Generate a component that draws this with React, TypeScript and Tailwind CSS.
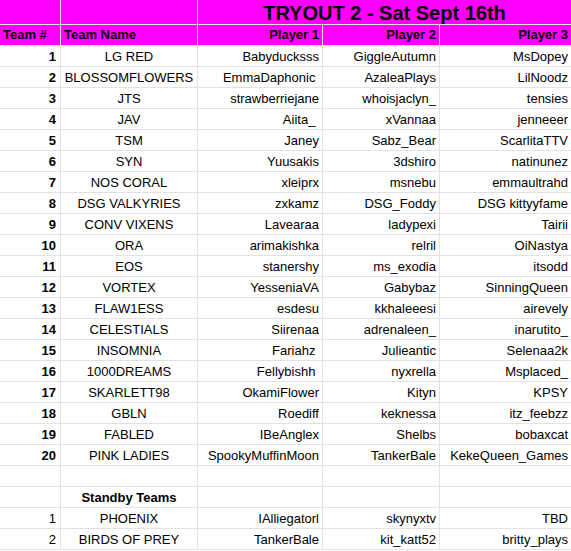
const TEAMS = [
  ['LG RED', 'Babyducksss', 'GiggleAutumn', 'MsDopey'],
  ['BLOSSOMFLOWERS', 'EmmaDaphonic ', 'AzaleaPlays', 'LilNoodz'],
  ['JTS', 'strawberriejane', 'whoisjaclyn_', 'tensies'],
  ['JAV', 'Aiita_ ', 'xVannaa', 'jenneeer'],
  ['TSM', 'Janey', 'Sabz_Bear', 'ScarlitaTTV'],
  ['SYN', 'Yuusakis', '3dshiro', 'natinunez'],
  ['NOS CORAL', 'xleiprx', 'msnebu', 'emmaultrahd'],
  ['DSG VALKYRIES', 'zxkamz', 'DSG_Foddy', 'DSG kittyyfame'],
  ['CONV VIXENS', 'Lavearaa', 'ladypexi', 'Tairii'],
  ['ORA', 'arimakishka', 'relril', 'OiNastya'],
  ['EOS', 'stanershy', 'ms_exodia', 'itsodd'],
  ['VORTEX', 'YesseniaVA', 'Gabybaz', 'SinningQueen'],
  ['FLAW1ESS', 'esdesu', 'kkhaleeesi', 'airevely'],
  ['CELESTIALS', 'Siirenaa', 'adrenaleen_', 'inarutito_'],
  ['INSOMNIA', 'Fariahz ', 'Julieantic', 'Selenaa2k'],
  ['1000DREAMS', 'Fellybishh ', 'nyxrella', 'Msplaced_'],
  ['SKARLETT98', 'OkamiFlower', 'Kityn', 'KPSY'],
  ['GBLN', 'Roediff', 'keknessa', 'itz_feebzz'],
  ['FABLED', 'IBeAnglex', 'Shelbs', 'bobaxcat'],
  ['PINK LADIES', 'SpookyMuffinMoon', 'TankerBale', 'KekeQueen_Games'],
];

const STANDBY = [
  ['PHOENIX', 'IAlliegatorl', 'skynyxtv', 'TBD'],
  ['BIRDS OF PREY', 'TankerBale', 'kit_katt52', 'britty_plays'],
];

const cell = 'bg-white h-[20px] pt-[1px] flex items-center whitespace-pre overflow-hidden';
const head = 'bg-[#ff00ff] h-[20px] flex items-center font-bold';

function Row({ num, bold, data }: { num: number; bold: boolean; data: string[] }) {
  return (
    <>
      <div className={`${cell} justify-end pr-[4px] ${bold ? 'font-bold' : ''}`}>{num}</div>
      <div className={`${cell} justify-center`}>{data[0]}</div>
      <div className={`${cell} justify-end pr-[3px]`}>{data[1]}</div>
      <div className={`${cell} justify-end pr-[3px]`}>{data[2]}</div>
      <div className={`${cell} justify-end pr-[3px]`}>{data[3]}</div>
    </>
  );
}

export default function App() {
  return (
    <div
      className="w-[571px] h-[551px] overflow-hidden bg-white text-[13px] text-black"
      style={{ fontFamily: '"Liberation Sans", Arial, sans-serif' }}
    >
      <div className="grid grid-cols-[60px_136px_124px_116px_131px] gap-px bg-[#e2e2e2] pb-px w-[571px]">
        {/* title row */}
        <div className="bg-[#ff00ff] h-[24px]" />
        <div className="bg-[#ff00ff] h-[24px]" />
        <div className="col-span-3 bg-[#ff00ff] h-[24px] flex items-center justify-center font-bold text-[20px] leading-none pt-[1px]">
          TRYOUT 2 - Sat Sept 16th
        </div>

        {/* header row */}
        <div className={`${head} pl-[3px]`}>Team #</div>
        <div className={`${head} pl-[3px]`}>Team Name</div>
        <div className={`${head} justify-end pr-[3px]`}>Player 1</div>
        <div className={`${head} justify-end pr-[3px]`}>Player 2</div>
        <div className={`${head} justify-end pr-[3px]`}>Player 3</div>

        {TEAMS.map((t, i) => (
          <Row key={t[0]} num={i + 1} bold data={t} />
        ))}

        {/* empty row */}
        <div className={cell} />
        <div className={cell} />
        <div className={cell} />
        <div className={cell} />
        <div className={cell} />

        {/* standby label */}
        <div className={cell} />
        <div className={`${cell} justify-center font-bold`}>Standby Teams</div>
        <div className={cell} />
        <div className={cell} />
        <div className={cell} />

        {STANDBY.map((t, i) => (
          <Row key={t[0]} num={i + 1} bold={false} data={t} />
        ))}
      </div>
    </div>
  );
}
